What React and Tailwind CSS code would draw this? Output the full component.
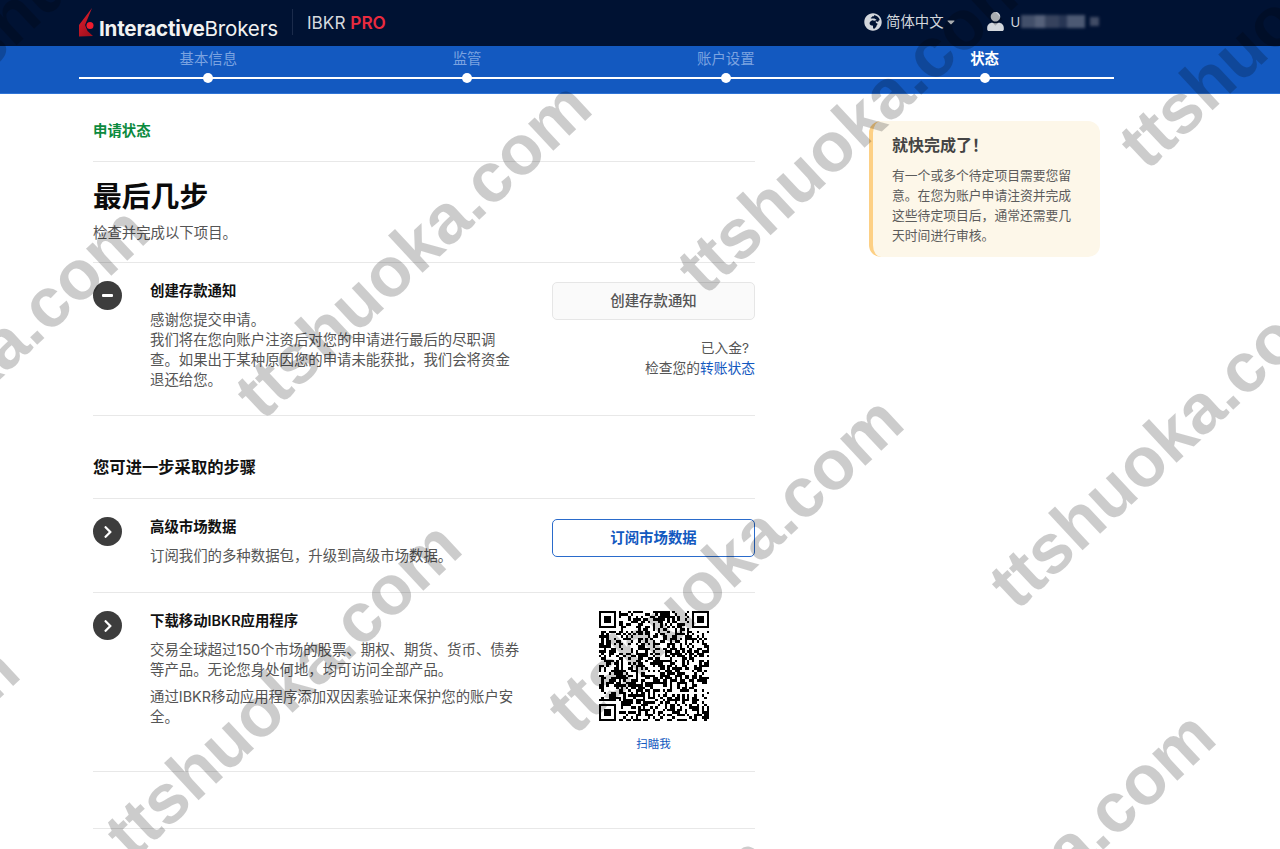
import React from 'react';
import { FaGlobeAfrica, FaUser, FaCaretDown, FaChevronRight } from 'react-icons/fa';

const FONT = '[font-family:Inter,"Noto_Sans_CJK_SC",sans-serif]';

const WATERMARKS = [];
for (let i = -2; i <= 3; i++) {
  for (let j = -2; j <= 3; j++) {
    const x = 270 + 442 * i - 130 * j;
    const y = 430 - 125 * i + 440 * j;
    if (x > -520 && x < 1300 && y > -40 && y < 1200) WATERMARKS.push([x, y]);
  }
}

function qrMatrix() {
  const n = 45;
  let seed = 20240611;
  const rnd = () => {
    seed = (seed * 1664525 + 1013904223) >>> 0;
    return (seed >>> 16) / 65536;
  };
  const m = [];
  for (let y = 0; y < n; y++) {
    const row = [];
    for (let x = 0; x < n; x++) row.push(rnd() > 0.5);
    m.push(row);
  }
  const finder = (ox, oy) => {
    for (let y = -1; y <= 7; y++) {
      for (let x = -1; x <= 7; x++) {
        const px = ox + x;
        const py = oy + y;
        if (px < 0 || py < 0 || px >= n || py >= n) continue;
        const ring = x === 0 || x === 6 || y === 0 || y === 6;
        const core = x >= 2 && x <= 4 && y >= 2 && y <= 4;
        const inside = x >= 0 && x <= 6 && y >= 0 && y <= 6;
        m[py][px] = inside && (ring || core);
      }
    }
  };
  finder(0, 0);
  finder(n - 7, 0);
  finder(0, n - 7);
  return m;
}

function QR() {
  const m = qrMatrix();
  return (
    <svg viewBox="0 0 45 45" className="h-[110px] w-[110px]" shapeRendering="crispEdges">
      {m.flatMap((row, y) =>
        row.map((on, x) => (on ? <rect key={`${x}-${y}`} x={x} y={y} width="1.02" height="1.02" fill="#000" /> : null))
      )}
    </svg>
  );
}

function Logo() {
  return (
    <svg viewBox="0 0 16 30" className="h-[30px] w-[16px] shrink-0">
      <defs>
        <linearGradient id="fl" x1="0" y1="0" x2="0.6" y2="1">
          <stop offset="0" stopColor="#e8202f" />
          <stop offset="1" stopColor="#a3101e" />
        </linearGradient>
      </defs>
      <path d="M13 0 L0 17 L0 28.5 L14 28 L8.5 23 L6 17 Z" fill="url(#fl)" />
      <circle cx="11" cy="17.5" r="3.5" fill="#ef1c2e" />
    </svg>
  );
}

function StatusIcon({ minus }) {
  return (
    <div className="flex h-[29px] w-[29px] shrink-0 items-center justify-center rounded-full bg-[#3d3d3d]">
      {minus ? <div className="h-[3px] w-[11px] rounded-[1px] bg-white" /> : <FaChevronRight className="h-[14px] w-[14px] text-white" />}
    </div>
  );
}

function Step({ label, active }) {
  return (
    <div className="flex flex-col items-center">
      <div className={`h-[24px] text-[14.4px] leading-[24px] ${active ? 'font-semibold text-white' : 'text-[#7ba3e0]'}`}>{label}</div>
      <div className="mt-[2px] h-[10px] w-[10px] rounded-full bg-white" />
    </div>
  );
}

export default function App() {
  return (
    <div className={`relative h-[849px] w-[1280px] overflow-hidden bg-white ${FONT}`}>
      <header className="flex h-[46px] items-center bg-[#001233] pl-[79px]">
        <Logo />
        <div className="ml-[4px] mt-[11px] w-[180px] text-[20.6px] leading-[28px] tracking-[-0.2px] text-[#f2f2f2]">
          <span className="font-bold">Interactive</span>
          <span className="font-normal">Brokers</span>
        </div>
        <div className="ml-[13px] mt-[-2px] h-[26px] w-px bg-[#1b2b4b]" />
        <div className="ml-[14px] mt-[-1px] w-[80px] text-[17.2px] leading-[24px] text-[#d6d9de]">
          IBKR <span className="font-semibold text-[#ea2b3f]">PRO</span>
        </div>
        <div className="ml-[477px] mt-[-3px] flex items-center text-[#d3d7dd]">
          <FaGlobeAfrica className="h-[18px] w-[18px]" />
          <span className="ml-[4px] text-[14.4px] leading-[20px]">简体中文</span>
          <FaCaretDown className="ml-[2px] h-[12px] w-[10px]" />
          <FaUser className="ml-[31px] h-[19px] w-[17px]" />
          <span className="ml-[7px] text-[13px] leading-[20px]">U</span>
          <div className="ml-[1px] flex h-[13px] w-[64px] opacity-90 blur-[1.5px]">
            <div className="h-full w-[14px] bg-[#4a5670]" />
            <div className="h-full w-[10px] bg-[#5f6a82]" />
            <div className="h-full w-[14px] bg-[#3c4862]" />
            <div className="h-full w-[8px] bg-[#2c3a58]" />
            <div className="h-full w-[18px] bg-[#55617a]" />
          </div>
          <div className="ml-[5px] h-[9px] w-[9px] bg-[#404c66] blur-[1.5px]" />
        </div>
      </header>

      <nav className="h-[48px] border-b border-[#2f74d6] bg-[#1359c0] pl-[79px]">
        <div className="relative grid w-[1035px] grid-cols-4 pt-[1px]">
          <div className="absolute left-0 right-0 top-[31px] h-[2px] bg-white" />
          <Step label="基本信息" />
          <Step label="监管" />
          <Step label="账户设置" />
          <Step label="状态" active />
        </div>
      </nav>

      <main className="flex pl-[93px]">
        <div className="w-[662px]">
          <div className="flex h-[68px] items-end border-b border-[#e8e8e8] pb-[20px]">
            <span className="text-[14.4px] font-semibold leading-[20px] text-[#0b8a3e]">申请状态</span>
          </div>
          <div className="border-b border-[#e8e8e8] pt-[15px] pb-[19px]">
            <h1 className="text-[28.8px] font-bold leading-[40px] text-[#0b0b0b]">最后几步</h1>
            <p className="mt-[6px] text-[14.4px] leading-[20px] text-[#555]">检查并完成以下项目。</p>
          </div>

          <section className="flex h-[153px] border-b border-[#e8e8e8] pt-[18px]">
            <StatusIcon minus />
            <div className="ml-[28px] w-[372px]">
              <h3 className="text-[14.4px] font-semibold leading-[20px] text-[#111]">创建存款通知</h3>
              <p className="mt-[9px] text-[14.4px] leading-[20px] text-[#555]">
                感谢您提交申请。
                <br />
                我们将在您向账户注资后对您的申请进行最后的尽职调查。如果出于某种原因您的申请未能获批，我们会将资金退还给您。
              </p>
            </div>
            <div className="ml-[30px] w-[203px]">
              <button className="mt-[1px] flex h-[38px] w-full items-center justify-center rounded-[5px] border border-[#e6e6e6] bg-[#fafafa] text-[14.4px] font-medium text-[#555]">
                创建存款通知
              </button>
              <div className="mt-[18px] pr-[6px] text-right text-[13.76px] leading-[20px] text-[#555]">已入金?</div>
              <div className="text-right text-[13.76px] leading-[20px] text-[#555]">
                检查您的<span className="text-[#1359c0]">转账状态</span>
              </div>
            </div>
          </section>

          <div className="flex h-[83px] items-center border-b border-[#e8e8e8] pt-[20px]">
            <h2 className="text-[16.32px] font-semibold leading-[24px] text-[#111]">您可进一步采取的步骤</h2>
          </div>

          <section className="flex h-[94px] border-b border-[#e8e8e8] pt-[18px]">
            <StatusIcon />
            <div className="ml-[28px] w-[372px]">
              <h3 className="text-[14.4px] font-semibold leading-[20px] text-[#111]">高级市场数据</h3>
              <p className="mt-[9px] text-[14.4px] leading-[20px] text-[#555]">订阅我们的多种数据包，升级到高级市场数据。</p>
            </div>
            <div className="ml-[30px] w-[203px]">
              <button className="mt-[2px] flex h-[38px] w-full items-center justify-center rounded-[5px] border border-[#2a6bcb] bg-white text-[14.4px] font-semibold text-[#1359c0]">
                订阅市场数据
              </button>
            </div>
          </section>

          <section className="flex h-[179px] border-b border-[#e8e8e8] pt-[18px]">
            <StatusIcon />
            <div className="ml-[28px] w-[372px]">
              <h3 className="text-[14.4px] font-semibold leading-[20px] text-[#111]">下载移动IBKR应用程序</h3>
              <p className="mt-[9px] text-[14.4px] leading-[20px] text-[#555]">交易全球超过150个市场的股票、期权、期货、货币、债券等产品。无论您身处何地，均可访问全部产品。</p>
              <p className="mt-[7px] text-[14.4px] leading-[20px] text-[#555]">通过IBKR移动应用程序添加双因素验证来保护您的账户安全。</p>
            </div>
            <div className="ml-[30px] flex w-[203px] flex-col items-center">
              <QR />
              <div className="mt-[14px] text-[11.5px] leading-[18px] text-[#1359c0]">扫瞄我</div>
            </div>
          </section>

          <div className="h-[57px] border-b border-[#e8e8e8]" />
        </div>

        <aside className="ml-[114px] mt-[27px] h-[136px] w-[231px] rounded-[12px] border-l-[4px] border-[#fdd085] bg-[#fdf7e9] pl-[19px] pr-[20px] pt-[13px]">
          <h4 className="text-[16px] font-semibold leading-[22px] text-[#444]">就快完成了！</h4>
          <p className="mt-[10px] text-[12.8px] leading-[20px] text-[#5c5c5c]">有一个或多个待定项目需要您留意。在您为账户申请注资并完成这些待定项目后，通常还需要几天时间进行审核。</p>
        </aside>
      </main>

      <div className="pointer-events-none absolute inset-0 overflow-hidden">
        {WATERMARKS.map(([x, y]) => (
          <div
            key={`${x}-${y}`}
            className="absolute origin-bottom-left whitespace-nowrap font-['Liberation_Sans'] text-[70px] font-bold leading-none text-black/20"
            style={{ left: x, top: y - 70, transform: 'rotate(-43deg)' }}
          >
            ttshuoka.com
          </div>
        ))}
      </div>
    </div>
  );
}
